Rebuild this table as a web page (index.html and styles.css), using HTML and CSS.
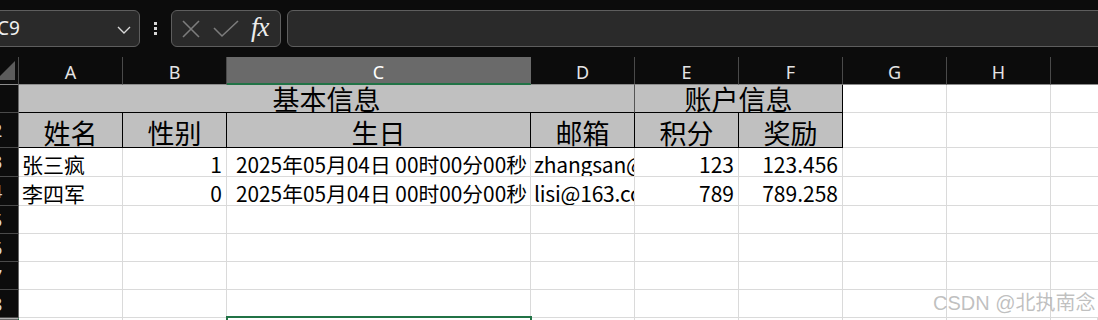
FILE: index.html
```html
<!DOCTYPE html>
<html lang="zh-CN">
<head>
<meta charset="utf-8">
<title>Sheet</title>
<link rel="stylesheet" href="styles.css">
</head>
<body>
<div class="app">
  <div class="topbar">
    <div class="namebox">
      <span class="name">C9</span>
      <svg class="chev" width="14" height="8" viewBox="0 0 14 8"><path d="M1 1 L7 7 L13 1" fill="none" stroke="#d8d8d8" stroke-width="1.4"/></svg>
    </div>
    <div class="dots"><i></i><i></i><i></i></div>
    <div class="fbtns">
      <svg width="20" height="20" viewBox="0 0 20 20"><path d="M2 2 L18 18 M18 2 L2 18" stroke="#7c7c7c" stroke-width="1.6" fill="none"/></svg>
      <svg width="26" height="20" viewBox="0 0 26 20"><path d="M1 9 L9 17 L25 2" stroke="#7c7c7c" stroke-width="1.6" fill="none"/></svg>
      <span class="fx">fx</span>
    </div>
    <div class="fbar"></div>
  </div>

  <div class="sheet">
    <div class="corner"><svg width="19" height="28" viewBox="0 0 19 28"><polygon points="-4,23 15,4 15,23" fill="#5c5c5c"/></svg></div>
    <div class="ch">A</div><div class="ch">B</div><div class="ch sel">C</div><div class="ch">D</div><div class="ch">E</div><div class="ch">F</div><div class="ch">G</div><div class="ch">H</div><div class="ch last"></div>

    <div class="rh"><span>1</span></div>
    <div class="hd m1">基本信息</div>
    <div class="hd m2">账户信息</div>
    <div class="c"></div><div class="c"></div><div class="c last"></div>

    <div class="rh"><span>2</span></div>
    <div class="hd b">姓名</div><div class="hd b">性别</div><div class="hd b">生日</div><div class="hd b">邮箱</div><div class="hd b">积分</div><div class="hd b">奖励</div>
    <div class="c"></div><div class="c"></div><div class="c last"></div>

    <div class="rh"><span>3</span></div>
    <div class="c t">张三疯</div><div class="c n">1</div><div class="c n date">2025年05月04日 00时00分00秒</div><div class="c t mail">zhangsan@qq.com</div><div class="c n">123</div><div class="c n">123.456</div>
    <div class="c"></div><div class="c"></div><div class="c last"></div>

    <div class="rh"><span>4</span></div>
    <div class="c t">李四军</div><div class="c n">0</div><div class="c n date">2025年05月04日 00时00分00秒</div><div class="c t mail">lisi@163.com</div><div class="c n">789</div><div class="c n">789.258</div>
    <div class="c"></div><div class="c"></div><div class="c last"></div>

    <div class="rh"><span>5</span></div>
    <div class="c"></div><div class="c"></div><div class="c"></div><div class="c"></div><div class="c"></div><div class="c"></div><div class="c"></div><div class="c"></div><div class="c last"></div>
    <div class="rh"><span>6</span></div>
    <div class="c"></div><div class="c"></div><div class="c"></div><div class="c"></div><div class="c"></div><div class="c"></div><div class="c"></div><div class="c"></div><div class="c last"></div>
    <div class="rh"><span>7</span></div>
    <div class="c"></div><div class="c"></div><div class="c"></div><div class="c"></div><div class="c"></div><div class="c"></div><div class="c"></div><div class="c"></div><div class="c last"></div>
    <div class="rh"><span>8</span></div>
    <div class="c"></div><div class="c"></div><div class="c"></div><div class="c"></div><div class="c"></div><div class="c"></div><div class="c"></div><div class="c"></div><div class="c last"></div>
    <div class="rh selr"><span>9</span></div>
    <div class="c"></div><div class="c"></div><div class="c"></div><div class="c"></div><div class="c"></div><div class="c"></div><div class="c"></div><div class="c"></div><div class="c last"></div>
    <div class="selbox"></div>
  </div>
  <div class="watermark">CSDN @北执南念</div>
</div>
</body>
</html>
```

FILE: styles.css
```css
* { box-sizing: border-box; margin: 0; padding: 0; }
html, body { width: 1098px; height: 320px; overflow: hidden; background: #ffffff; }
body { font-family: "Noto Sans", "Noto Sans CJK SC", sans-serif; }
.app { position: relative; width: 1098px; height: 320px; overflow: hidden; }

.topbar {
  height: 57px;
  background: #0c0c0c;
  display: flex;
  align-items: flex-start;
  padding-top: 10px;
}
.namebox {
  margin-left: -11px;
  width: 151px;
  height: 37px;
  border: 1px solid #5e5e5e;
  border-radius: 6px;
  background: #2a2a2a;
  display: flex;
  align-items: center;
  justify-content: space-between;
  padding: 0 8px 0 7px;
}
.name { color: #f0f0f0; font-family: "Noto Sans", sans-serif; font-size: 19px; line-height: 1; }
.chev { margin-top: 2px; }
.dots {
  width: 31px;
  height: 37px;
  display: flex;
  flex-direction: column;
  align-items: center;
  justify-content: center;
  gap: 2px;
}
.dots i { display: block; width: 3px; height: 3px; background: #d6d6d6; }
.fbtns {
  width: 110px;
  height: 37px;
  border: 1px solid #5e5e5e;
  border-radius: 6px;
  background: #2a2a2a;
  display: flex;
  align-items: center;
  padding-left: 9px;
  gap: 12px;
}
.fx {
  color: #ececec;
  font-family: "Liberation Serif", serif;
  font-style: italic;
  font-size: 27px;
  line-height: 1;
  margin-left: 0;
  margin-top: -2px;
  letter-spacing: -1px;
}
.fbar {
  margin-left: 6px;
  flex: 1;
  margin-right: -20px;
  height: 37px;
  border: 1px solid #5e5e5e;
  border-radius: 6px;
  background: #2a2a2a;
}

.sheet {
  display: grid;
  grid-template-columns: 19px 104px 104px 304px 104px 104px 104px 104px 104px 47px;
  grid-template-rows: 28px 28px 35px 29px 29px 28px 28px 28px 28px 20px;
}
.corner {
  background: #0c0c0c;
  border-right: 1px solid #4a4a4a;
  border-bottom: 1px solid #8c8c8c;
  overflow: hidden;
}
.corner svg { display: block; }
.ch {
  background: #0c0c0c;
  color: #e4e4e4;
  border-right: 1px solid #4a4a4a;
  border-bottom: 1px solid #8c8c8c;
  display: flex;
  align-items: center;
  justify-content: center;
  font-family: "Noto Sans", sans-serif;
  font-size: 18px;
  line-height: 1;
  padding-top: 3px;
}
.ch.sel { background: #6a6a6a; color: #ffffff; border-bottom: 2px solid #217346; border-right-color: #6a6a6a; }
.ch.last { border-right: none; }
.rh {
  background: #0c0c0c;
  border-right: 1px solid #6a6a6a;
  border-bottom: 1px solid #4a4a4a;
  overflow: hidden;
  display: flex;
  align-items: center;
  color: #d8d8d8;
  font-family: "Noto Sans", sans-serif;
  font-size: 18px;
  line-height: 1;
  white-space: nowrap;
}
.rh span { margin-left: -8px; }
.rh.selr { background: #6a6a6a; border-right: 1px solid #217346; border-top: 1px solid #b0b0b0; }

.c {
  border-right: 1px solid #dadada;
  border-bottom: 1px solid #dadada;
  font-family: "Noto Sans CJK SC", sans-serif;
  font-size: 21px;
  line-height: 1;
  color: #000000;
  white-space: nowrap;
  overflow: hidden;
  display: flex;
  align-items: flex-end;
  padding-bottom: 1px;
}
.c.last { border-right: none; }
.c.t { padding-left: 3px; justify-content: flex-start; }
.c.n { padding-right: 4px; justify-content: flex-end; }
.c.n.date { padding-right: 3px; font-size: 20.8px; }
.c.mail { letter-spacing: -0.2px; }

.hd {
  background: #c0c0c0;
  font-family: "Noto Sans CJK SC", sans-serif;
  font-size: 27px;
  line-height: 1;
  color: #000000;
  display: flex;
  align-items: flex-end;
  justify-content: center;
  border-bottom: 1px solid #000000;
  white-space: nowrap;
}
.hd.m1 { grid-column: 2 / span 4; border-right: 1px solid #555555; padding-bottom: 0; }
.hd.m2 { grid-column: 6 / span 2; border-right: 1px solid #000000; }
.hd.b { border-right: 1px solid #000000; padding-bottom: 1px; }

.selbox {
  grid-column: 4;
  grid-row: 10;
  margin: -2px -1px 0 -1px;
  border: 2px solid #217346;
  border-bottom: none;
}

.watermark {
  position: absolute;
  left: 933px;
  top: 291px;
  font-family: "Liberation Sans", "Noto Sans CJK SC", sans-serif;
  font-size: 20px;
  line-height: 24px;
  color: rgba(150, 150, 150, 0.6);
  white-space: nowrap;
}
```
